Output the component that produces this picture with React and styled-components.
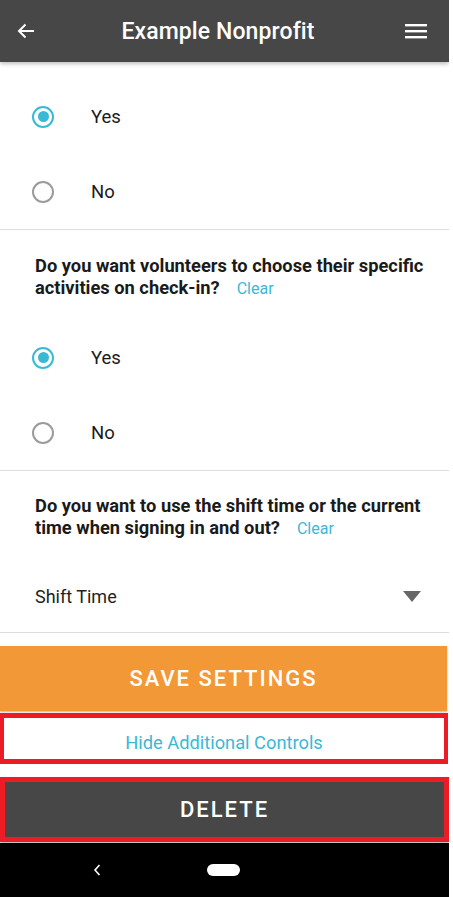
import styled, { createGlobalStyle } from "styled-components";
import { useState } from "react";

const GlobalStyle = createGlobalStyle`
  html, body {
    margin: 0;
    padding: 0;
    background: #ffffff;
  }
  body {
    font-family: Roboto, "Liberation Sans", sans-serif;
    color: #1f1f1f;
  }
`;

const questions = [
  {
    id: "activities",
    text: "Do you want volunteers to choose their specific activities on check-in?",
  },
];

export default function App() {
  const [first, setFirst] = useState("yes");
  const [activities, setActivities] = useState("yes");

  return (
    <Screen>
      <GlobalStyle />
      <Header>
        <IconButton aria-label="back">
          <svg width="18" height="16" viewBox="0 0 18 16">
            <path d="M17 8H2M8.5 1.5L2 8l6.5 6.5" fill="none" stroke="#fff" strokeWidth="2" />
          </svg>
        </IconButton>
        <Title>Example Nonprofit</Title>
        <IconButton aria-label="menu">
          <svg width="22" height="16" viewBox="0 0 22 16">
            <rect x="0" y="1" width="22" height="2.4" fill="#fff" />
            <rect x="0" y="7" width="22" height="2.4" fill="#fff" />
            <rect x="0" y="13" width="22" height="2.4" fill="#fff" />
          </svg>
        </IconButton>
      </Header>

      <Content>
        <Section $top={17}>
          <RadioRow label="Yes" checked={first === "yes"} onSelect={() => setFirst("yes")} />
          <RadioRow label="No" checked={first === "no"} onSelect={() => setFirst("no")} />
        </Section>

        {questions.map((q) => (
          <Section key={q.id} $top={25}>
            <Question>
              {q.text}
              <Clear>Clear</Clear>
            </Question>
            <Options>
              <RadioRow label="Yes" checked={activities === "yes"} onSelect={() => setActivities("yes")} />
              <RadioRow label="No" checked={activities === "no"} onSelect={() => setActivities("no")} />
            </Options>
          </Section>
        ))}

        <Section $top={24}>
          <Question>
            Do you want to use the shift time or the current time when signing in and out?
            <Clear>Clear</Clear>
          </Question>
          <SelectRow>
            <span>Shift Time</span>
            <svg width="18" height="11" viewBox="0 0 18 11">
              <path d="M0 0h18L9 11z" fill="#676767" />
            </svg>
          </SelectRow>
        </Section>

        <Actions>
          <SaveButton>SAVE SETTINGS</SaveButton>
          <Highlight>
            <LinkButton>Hide Additional Controls</LinkButton>
          </Highlight>
          <DeleteWrap>
            <DeleteButton>DELETE</DeleteButton>
          </DeleteWrap>
        </Actions>
      </Content>

      <NavBar>
        <svg width="10" height="14" viewBox="0 0 10 14">
          <path d="M7.5 2L3 7l4.5 5" fill="none" stroke="#fff" strokeWidth="1.6" />
        </svg>
        <HomePill />
      </NavBar>
    </Screen>
  );
}

function RadioRow({ label, checked, onSelect }) {
  return (
    <Row onClick={onSelect}>
      <Radio $checked={checked} />
      <RowLabel>{label}</RowLabel>
    </Row>
  );
}

const Screen = styled.div`
  width: 449px;
  height: 897px;
  display: flex;
  flex-direction: column;
  background: #ffffff;
  overflow: hidden;
`;

const Header = styled.header`
  height: 62px;
  flex-shrink: 0;
  display: flex;
  align-items: center;
  justify-content: space-between;
  padding: 0 19px 0 14px;
  background: #474747;
  box-shadow: 0 2px 4px rgba(0, 0, 0, 0.25);
  position: relative;
  z-index: 1;
`;

const IconButton = styled.button`
  background: none;
  border: none;
  padding: 3px;
  display: flex;
  align-items: center;
  cursor: pointer;
`;

const Title = styled.h1`
  margin: 0 0 0 -4px;
  font-size: 23px;
  font-weight: 500;
  color: #ffffff;
  letter-spacing: 0.1px;
`;

const Content = styled.main`
  flex: 1;
  display: flex;
  flex-direction: column;
`;

const Section = styled.section`
  padding-top: ${({ $top }) => $top}px;
  border-bottom: 1px solid #dddddd;
`;

const Question = styled.p`
  margin: 0;
  padding: 0 16px 0 35px;
  font-size: 18.3px;
  line-height: 22px;
  font-weight: 700;
  color: #1a1a1a;
`;

const Clear = styled.span`
  display: inline-block;
  margin-left: 17px;
  font-size: 16px;
  line-height: 20px;
  font-weight: 400;
  color: #3ab9d5;
`;

const Options = styled.div`
  margin-top: 21px;
`;

const Row = styled.div`
  height: 75px;
  display: flex;
  align-items: center;
  padding-left: 32px;
  cursor: pointer;
`;

const Radio = styled.span`
  width: 18px;
  height: 18px;
  border-radius: 50%;
  border: 2.3px solid ${({ $checked }) => ($checked ? "#3ab9d5" : "#9b9b9b")};
  display: flex;
  align-items: center;
  justify-content: center;
  &::after {
    content: "";
    width: 11px;
    height: 11px;
    border-radius: 50%;
    background: ${({ $checked }) => ($checked ? "#3ab9d5" : "transparent")};
  }
`;

const RowLabel = styled.span`
  margin-left: 37px;
  font-size: 18.5px;
  color: #1a1a1a;
`;

const SelectRow = styled.div`
  height: 72px;
  margin-top: 21px;
  display: flex;
  align-items: center;
  justify-content: space-between;
  padding: 0 28px 0 35px;
  font-size: 18px;
  color: #1f1f1f;
`;

const Actions = styled.div`
  display: flex;
  flex-direction: column;
  padding-top: 13px;
`;

const SaveButton = styled.button`
  width: 447px;
  height: 65px;
  border: none;
  background: #f39836;
  color: #ffffff;
  font-family: Roboto, "Liberation Sans", sans-serif;
  font-size: 22px;
  font-weight: 500;
  letter-spacing: 2px;
  box-shadow: 0 1px 2px rgba(0, 0, 0, 0.3);
`;

const Highlight = styled.div`
  margin-top: 2px;
  width: 448px;
  height: 51px;
  box-sizing: border-box;
  border: 4px solid #ed1c24;
  border-top-width: 5px;
  border-bottom-width: 5px;
  display: flex;
  align-items: center;
  justify-content: center;
`;

const LinkButton = styled.button`
  background: none;
  border: none;
  padding: 8px 0 0;
  font-family: Roboto, "Liberation Sans", sans-serif;
  font-size: 18.3px;
  color: #3ab9d5;
`;

const DeleteWrap = styled.div`
  margin-top: 13px;
  width: 449px;
  height: 65px;
  box-sizing: border-box;
  border: 5px solid #ed1c24;
  box-shadow: 0 2px 3px rgba(0, 0, 0, 0.3);
  display: flex;
`;

const DeleteButton = styled.button`
  flex: 1;
  border: none;
  background: #474747;
  color: #ffffff;
  font-family: Roboto, "Liberation Sans", sans-serif;
  font-size: 22px;
  font-weight: 500;
  letter-spacing: 2px;
`;

const NavBar = styled.nav`
  height: 54px;
  flex-shrink: 0;
  display: flex;
  align-items: center;
  gap: 105px;
  padding-left: 92px;
  background: #000000;
`;

const HomePill = styled.span`
  width: 33px;
  height: 12px;
  border-radius: 6px;
  background: #ffffff;
`;
